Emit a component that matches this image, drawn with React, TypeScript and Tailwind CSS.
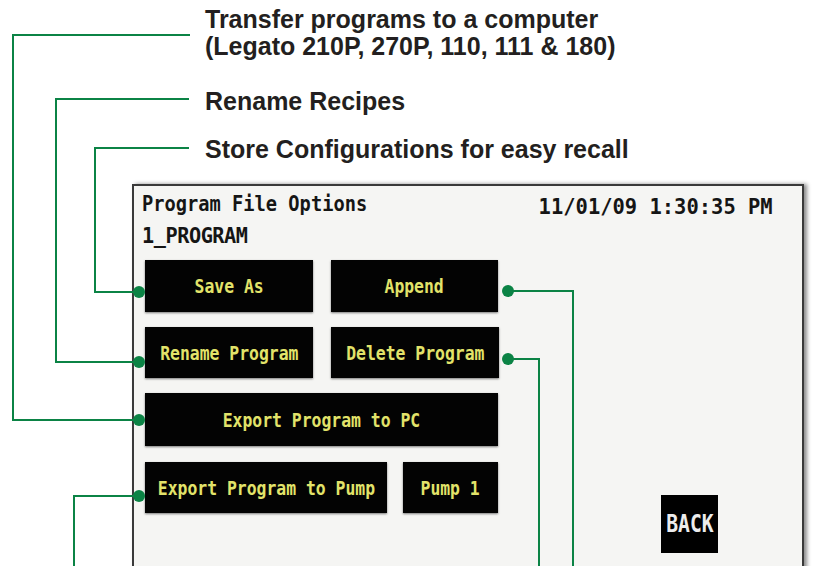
import React from "react";

const GREEN = "#0b8345";
const MONO = { fontFamily: '"DejaVu Sans Mono", monospace' };

function Btn({ label, w, h }: { label: string; w: string; h: string }) {
  return (
    <div
      className={`${w} ${h} flex items-center justify-center bg-[#030303] shadow-[0_1px_2px_rgba(0,0,0,0.5)] text-[#e2e36a] font-bold whitespace-nowrap`}
      style={MONO}
    >
      <span className="inline-block text-[20px] leading-[24px] scale-x-[0.82]">{label}</span>
    </div>
  );
}

function Callouts() {
  const paths = [
    "M190 35 H13 V420 H139",
    "M189 99 H56 V362 H139",
    "M189 148 H95 V292 H139",
    "M508 291 H573 V570",
    "M508 359 H539 V570",
    "M139 496 H74 V570",
  ];
  const dots = [
    [139, 420],
    [139, 362],
    [139, 292],
    [508, 291],
    [508, 359],
    [139, 496],
  ];
  return (
    <svg className="absolute inset-0 pointer-events-none" width="817" height="566">
      {paths.map((d) => (
        <path key={d} d={d} fill="none" stroke={GREEN} strokeWidth="2" />
      ))}
      {dots.map(([x, y]) => (
        <circle key={`${x}-${y}`} cx={x} cy={y} r="6" fill={GREEN} />
      ))}
    </svg>
  );
}

export default function App() {
  return (
    <div className="relative w-[817px] h-[566px] overflow-hidden bg-white">
      <div
        className="pl-[205px] pt-[6px] text-[#231f20] text-[25px] leading-[27px] font-bold"
        style={{ fontFamily: '"Liberation Sans", Arial, sans-serif' }}
      >
        <div>Transfer programs to a computer</div>
        <div>(Legato 210P, 270P, 110, 111 &amp; 180)</div>
        <div className="mt-[28px]">Rename Recipes</div>
        <div className="mt-[21px]">Store Configurations for easy recall</div>
      </div>

      <div className="ml-[132px] mt-[21px] w-[672px] h-[400px] border-2 border-[#3a3a3a] bg-[#f5f5f3] shadow-[3px_0_4px_rgba(0,0,0,0.45)]">
        <div className="flex justify-between pl-[8px] pr-[29px] pt-[5px] text-[#151515] font-bold" style={MONO}>
          <div>
            <div className="text-[22px] leading-[26px] whitespace-nowrap origin-left scale-x-[0.85]">Program File Options</div>
            <div className="mt-[6px] text-[22px] leading-[26px] tracking-[-0.5px] whitespace-nowrap origin-left scale-x-[0.92]">1_PROGRAM</div>
          </div>
          <div className="mt-[3px] text-[22px] leading-[26px] whitespace-nowrap origin-right scale-x-[0.93]">11/01/09 1:30:35 PM</div>
        </div>

        <div className="flex mt-[11px] pl-[11px]">
          <div className="flex flex-col w-[353px]">
            <div className="flex gap-[18px]">
              <Btn label="Save As" w="w-[168px]" h="h-[52px]" />
              <Btn label="Append" w="w-[168px]" h="h-[52px]" />
            </div>
            <div className="flex gap-[18px] mt-[15px]">
              <Btn label="Rename Program" w="w-[168px]" h="h-[51px]" />
              <Btn label="Delete Program" w="w-[168px]" h="h-[51px]" />
            </div>
            <div className="mt-[15px]">
              <Btn label="Export Program to PC" w="w-[353px]" h="h-[53px]" />
            </div>
            <div className="flex gap-[16px] mt-[16px]">
              <Btn label="Export Program to Pump" w="w-[242px]" h="h-[51px]" />
              <Btn label="Pump 1" w="w-[95px]" h="h-[51px]" />
            </div>
          </div>
          <div className="ml-[163px] mt-[235px]">
            <div className="w-[57px] h-[58px] flex items-center justify-center bg-black text-[#ececec] font-bold" style={MONO}>
              <span className="inline-block text-[24px] leading-[28px] scale-x-[0.82]">BACK</span>
            </div>
          </div>
        </div>
      </div>

      <Callouts />
    </div>
  );
}
